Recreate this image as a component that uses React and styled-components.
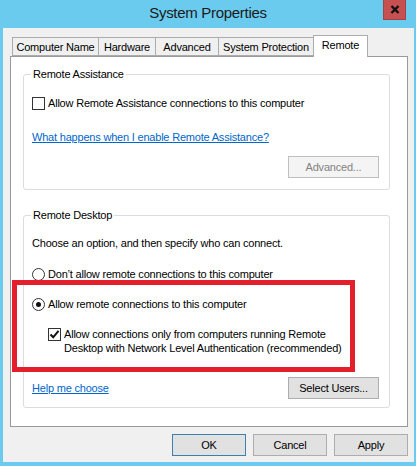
import React from 'react';
import styled, { createGlobalStyle } from 'styled-components';

const UI_FONT = `"Liberation Sans", Arial, sans-serif`;

const GlobalStyle = createGlobalStyle`
  html, body {
    margin: 0;
    padding: 0;
    background: #6acbee;
  }
  body {
    font-family: ${UI_FONT};
    font-size: 11px;
    letter-spacing: -0.2px;
    color: #000;
  }
`;

const Window = styled.div`
  position: relative;
  width: 416px;
  height: 466px;
  background: #6acbee;
  display: flex;
  flex-direction: column;
  box-sizing: border-box;
`;

const TitleBar = styled.div`
  height: 28px;
  display: grid;
  grid-template-columns: 1fr auto 1fr;
  align-items: start;
`;

const Title = styled.div`
  grid-column: 2;
  font-size: 15px;
  letter-spacing: -0.3px;
  line-height: 26px;
  color: #1a1a1a;
`;

const CloseButton = styled.div`
  grid-column: 3;
  justify-self: end;
  margin-right: 10px;
  width: 23px;
  height: 20px;
  background: #c75050;
  border: 1px solid #a44242;
  border-top: none;
  box-sizing: border-box;
  display: flex;
  align-items: center;
  justify-content: center;
`;

const Client = styled.div`
  flex: 1;
  margin: 0 2px 4px 3px;
  background: #f0f0f0;
  padding: 7px 6px 6px 7px;
  display: flex;
  flex-direction: column;
`;

const TabStrip = styled.div`
  display: flex;
  align-items: flex-end;
  height: 21px;
  padding-left: 2px;
  position: relative;
  z-index: 1;
`;

const Tab = styled.div`
  width: ${({ $w }) => $w}px;
  height: ${({ $active }) => ($active ? 22 : 19)}px;
  margin-left: -1px;
  margin-bottom: ${({ $active }) => ($active ? -1 : 0)}px;
  box-sizing: border-box;
  border: 1px solid #acacac;
  border-bottom: ${({ $active }) => ($active ? 'none' : '1px solid #acacac')};
  background: ${({ $active }) => ($active ? '#fff' : '#f0f0f0')};
  display: flex;
  justify-content: center;
  align-items: ${({ $active }) => ($active ? 'flex-start' : 'center')};
  padding-top: ${({ $active }) => ($active ? 3 : 0)}px;
  white-space: nowrap;
  &:first-child {
    margin-left: 0;
  }
`;

const Panel = styled.div`
  flex: 1;
  background: #fff;
  border: 1px solid #999;
  padding: 10px 17px 0 12px;
  display: flex;
  flex-direction: column;
`;

const Group = styled.fieldset`
  margin: ${({ $gap }) => $gap}px 0 0 0;
  padding: ${({ $pt }) => $pt}px 10px ${({ $pb }) => $pb}px 8px;
  border: 1px solid #dcdcdc;
  border-radius: 3px;
  min-width: 0;
  display: flex;
  flex-direction: column;
`;

const Legend = styled.legend`
  padding: 0 2px;
  margin-left: -1px;
  line-height: 15px;
`;

const Row = styled.div`
  display: flex;
  align-items: ${({ $top }) => ($top ? 'flex-start' : 'center')};
  justify-content: ${({ $spread }) => ($spread ? 'space-between' : 'flex-start')};
  margin-top: ${({ $mt }) => $mt || 0}px;
  margin-left: ${({ $indent }) => $indent || 0}px;
  line-height: ${({ $lh }) => $lh || 15}px;
  gap: 3px;
`;

const Text = styled.span`
  line-height: inherit;
`;

const Link = styled.a`
  color: #0066cc;
  text-decoration: underline;
  line-height: 15px;
  cursor: pointer;
`;

const BoxMark = styled.span`
  width: 13px;
  height: 13px;
  flex: none;
  box-sizing: border-box;
  border: 1px solid #333;
  background: #fff;
  display: flex;
  align-items: center;
  justify-content: center;
  margin-top: ${({ $nudge }) => $nudge || 0}px;
`;

const RadioMark = styled.span`
  width: 13px;
  height: 13px;
  flex: none;
  box-sizing: border-box;
  border: 1px solid #333;
  border-radius: 50%;
  background: #fff;
  display: flex;
  align-items: center;
  justify-content: center;
  &::after {
    content: '';
    display: ${({ $on }) => ($on ? 'block' : 'none')};
    width: 5px;
    height: 5px;
    border-radius: 50%;
    background: #111;
  }
`;

const Button = styled.div`
  width: ${({ $w }) => $w || 91}px;
  height: 22px;
  box-sizing: border-box;
  border: 1px solid ${({ $default, $disabled }) =>
    $default ? '#3c7fb1' : $disabled ? '#bfbfbf' : '#adadad'};
  background: ${({ $disabled }) => ($disabled ? '#f4f4f4' : '#e1e1e1')};
  color: ${({ $disabled }) => ($disabled ? '#838383' : '#000')};
  display: flex;
  align-items: center;
  justify-content: center;
  flex: none;
`;

const ButtonRow = styled.div`
  display: flex;
  justify-content: flex-end;
  gap: 7px;
  margin-top: 7px;
`;

const Highlight = styled.div`
  position: absolute;
  left: 12px;
  top: 280px;
  width: 343px;
  height: 92px;
  box-sizing: border-box;
  border: 5px solid #e21f2b;
  pointer-events: none;
`;

const tabs = [
  { label: 'Computer Name', w: 87 },
  { label: 'Hardware', w: 58 },
  { label: 'Advanced', w: 64 },
  { label: 'System Protection', w: 96 },
  { label: 'Remote', w: 55, active: true },
];

const CheckBox = ({ checked, nudge }) => (
  <BoxMark $nudge={nudge}>
    {checked && (
      <svg width="11" height="11" viewBox="0 0 11 11">
        <path d="M1.5 5.5 L4.2 8.3 L9.5 1.8" fill="none" stroke="#111" strokeWidth="2" />
      </svg>
    )}
  </BoxMark>
);

export default function App() {
  return (
    <>
      <GlobalStyle />
      <Window>
        <TitleBar>
          <Title>System Properties</Title>
          <CloseButton>
            <svg width="10" height="9" viewBox="0 0 10 9">
              <path d="M1.5 1 L8.5 8 M8.5 1 L1.5 8" stroke="#111" strokeWidth="2.4" />
            </svg>
          </CloseButton>
        </TitleBar>
        <Client>
          <TabStrip>
            {tabs.map((t) => (
              <Tab key={t.label} $w={t.w} $active={t.active}>
                {t.label}
              </Tab>
            ))}
          </TabStrip>
          <Panel>
            <Group $gap={0} $pt={14} $pb={11}>
              <Legend>Remote Assistance</Legend>
              <Row>
                <CheckBox />
                <Text>Allow Remote Assistance connections to this computer</Text>
              </Row>
              <Row $mt={19}>
                <Link>What happens when I enable Remote Assistance?</Link>
              </Row>
              <Row $mt={11} $spread>
                <span />
                <Button $disabled>Advanced...</Button>
              </Row>
            </Group>
            <Group $gap={18} $pt={13} $pb={8}>
              <Legend>Remote Desktop</Legend>
              <Row>
                <Text>Choose an option, and then specify who can connect.</Text>
              </Row>
              <Row $mt={16}>
                <RadioMark />
                <Text>Don’t allow remote connections to this computer</Text>
              </Row>
              <Row $mt={15}>
                <RadioMark $on />
                <Text>Allow remote connections to this computer</Text>
              </Row>
              <Row $mt={15} $indent={16} $top $lh={14}>
                <CheckBox checked nudge={1} />
                <Text>
                  Allow connections only from computers running Remote
                  <br />
                  Desktop with Network Level Authentication (recommended)
                </Text>
              </Row>
              <Row $mt={22} $spread>
                <Link>Help me choose</Link>
                <Button>Select Users...</Button>
              </Row>
            </Group>
          </Panel>
          <ButtonRow>
            <Button $w={74} $default>OK</Button>
            <Button $w={74}>Cancel</Button>
            <Button $w={74}>Apply</Button>
          </ButtonRow>
        </Client>
        <Highlight />
      </Window>
    </>
  );
}
